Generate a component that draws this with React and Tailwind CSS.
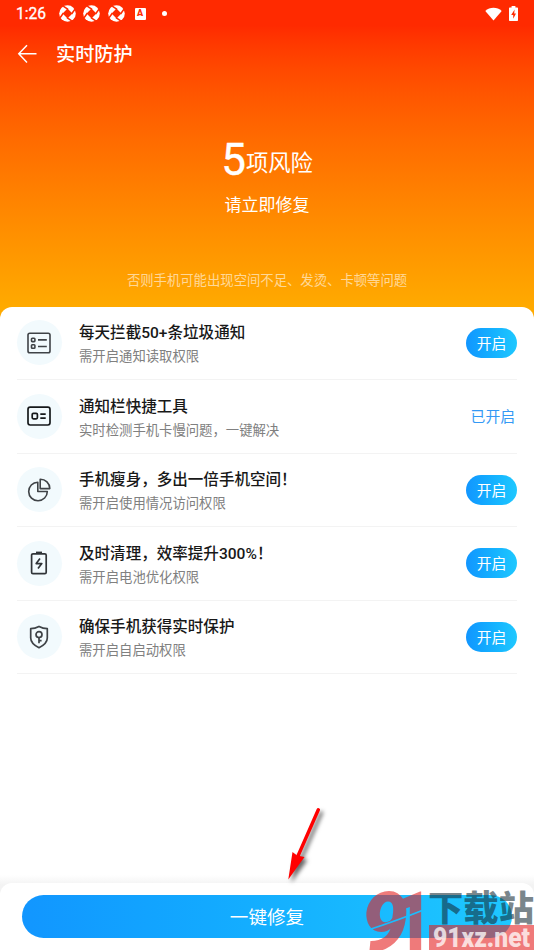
const tasks = [
  { icon: 'list', title: '每天拦截50+条垃圾通知', desc: '需开启通知读取权限', enabled: false },
  { icon: 'card', title: '通知栏快捷工具', desc: '实时检测手机卡慢问题，一键解决', enabled: true },
  { icon: 'pie', title: '手机瘦身，多出一倍手机空间！', desc: '需开启使用情况访问权限', enabled: false },
  { icon: 'battery', title: '及时清理，效率提升300%！', desc: '需开启电池优化权限', enabled: false },
  { icon: 'shield', title: '确保手机获得实时保护', desc: '需开启自启动权限', enabled: false },
];

// Line icons, all on a 24px grid
const icons = {
  list: (
    <g stroke="#3f4347" strokeWidth="1.6">
      <rect x="1" y="2.2" width="22" height="19.6" rx="1.8" />
      <rect x="4.5" y="7.2" width="3.4" height="3.4" rx="0.8" />
      <rect x="4.5" y="13.8" width="3.4" height="3.4" rx="0.8" />
      <path d="M11 8.9h8.800M11 15.500h8.800" />
    </g>
  ),
  card: (
    <g stroke="#16191b" strokeWidth="1.7">
      <rect x="1" y="3.2" width="22" height="17.8" rx="2.2" />
      <rect x="5.2" y="9.4" width="5.2" height="5.4" rx="1.2" />
      <path d="M13.300 10.200h5.400M13.300 14.200h5.400" />
    </g>
  ),
  pie: (
    <g stroke="#3f4347" strokeWidth="1.6" strokeLinejoin="round">
      <path d="M10.800 4.200A9.300 9.300 0 1 0 20.300 13.500H10.800z" />
      <path d="M13.200 1.200v9.400h9.600A9.500 9.500 0 0 0 13.200 1.200z" />
    </g>
  ),
  battery: (
    <g stroke="#303438" strokeWidth="1.7" strokeLinejoin="round">
      <rect x="4.6" y="2.8" width="14.6" height="19.8" rx="1.4" />
      <path d="M9 1.600h6" strokeWidth="2" />
      <path d="M13 7.600l-3.800 5h5.600l-3.800 5" strokeWidth="1.7" />
    </g>
  ),
  shield: (
    <g stroke="#3f4347" strokeWidth="1.7" strokeLinejoin="round">
      <path d="M12 1.400c2.800 1.500 5.400 2.200 8.300 2.300v9.200c0 4.400-3.600 7.400-8.300 9.800-4.700-2.400-8.300-5.400-8.300-9.800V3.700c2.900-.1 5.500-.8 8.300-2.300z" />
      <circle cx="12" cy="9.6" r="3" />
      <path d="M12 12.600v5.600M12 15.700h2.600" />
    </g>
  ),
};

function ApertureIcon() {
  return (
    <svg viewBox="0 0 16 16" className="size-[17px]" fill="none">
      <circle cx="8" cy="8" r="7.8" fill="#fff" />
      <path d="M8 3.400L12.600 8L8 12.600L3.400 8z" fill="#ff2b00" />
      <path
        d="M8.500 4.200L4 1M11.800 8.500L15 4M7.500 11.800L12 15M4.200 7.500L1 12"
        stroke="#ff2b00"
        strokeWidth="1.4"
      />
    </svg>
  );
}

function StatusBar() {
  return (
    <div className="flex h-[27px] items-center pr-[16px] pl-4 text-white">
      <span className="w-[42.5px] font-[Roboto] text-[15.6px] leading-7 [-webkit-text-stroke:0.3px_white]">1:26</span>
      <div className="flex items-center gap-[7.5px]">
        <ApertureIcon />
        <ApertureIcon />
        <ApertureIcon />
      </div>
      <span className="ml-[10px] flex h-[12px] w-[11px] items-center justify-center rounded-[1px] bg-white font-[Roboto] text-[9px] leading-none font-black text-[#ff2b00]">
        A
      </span>
      <span className="ml-[16px] size-[5px] rounded-full bg-white" />
      <svg viewBox="0 0 18 14" className="ml-auto h-[14px] w-[17px]" fill="#fff">
        <path d="M9 14L.3 3.800C5-.8 13-.8 17.700 3.800z" />
      </svg>
      <svg viewBox="0 0 9 15" className="ml-[7px] h-[15px] w-[9px]">
        <path
          d="M2.600 0h3.800v1.600H8.300c.4 0 .7.3.7.7v12c0 .4-.3.700-.7.700H.7c-.4 0-.7-.3-.7-.7v-12c0-.4.3-.7.7-.7h1.900z"
          fill="#fff"
        />
        <path d="M5.600 3.500L2.200 9h2v3.800L7 7.500H5.200z" fill="#ff2b00" />
      </svg>
    </div>
  );
}

function TaskRow({ task }) {
  return (
    <li className="flex h-[73.5px] items-center border-b border-[#f3f3f3]">
      <span className="flex size-[45px] shrink-0 items-center justify-center rounded-full bg-[#f2fafd]">
        <svg viewBox="0 0 24 24" className="mr-px size-6" fill="none">
          {icons[task.icon]}
        </svg>
      </span>
      <div className="ml-[17px] flex-1 pt-[5px] whitespace-nowrap">
        <h2 className="text-[15.55px] leading-6 font-medium text-[#181818]">{task.title}</h2>
        <p className="text-[13.35px] leading-6 text-[#808080]">{task.desc}</p>
      </div>
      {task.enabled ? (
        <span className="mr-[2px] pt-[2px] text-[14.8px] text-[#3399f5]">已开启</span>
      ) : (
        <button className="h-[30px] w-[51px] rounded-full bg-linear-to-r from-[#1296ff] to-[#1fc8ff] pt-px text-[14.8px] leading-[30px] text-white">
          开启
        </button>
      )}
    </li>
  );
}

function Watermark() {
  return (
    <svg viewBox="0 0 174 60" className="absolute right-0 bottom-0 h-[60px] w-[174px]">
      <defs>
        <mask id="slash">
          <rect width="174" height="60" fill="#fff" />
          <path d="M8 40Q36 31 66 19" stroke="#000" strokeWidth="1.8" fill="none" />
        </mask>
      </defs>
      <g mask="url(#slash)" opacity="0.6">
        <text
          y="61"
          fontFamily="Roboto, sans-serif"
          fontSize="83"
          fontWeight="900"
          fill="#e52222"
        >
          <tspan x="1" fontStyle="italic" textLength="47" lengthAdjust="spacingAndGlyphs">9</tspan>
          <tspan x="33" textLength="40" lengthAdjust="spacingAndGlyphs">1</tspan>
        </text>
      </g>
      <text
        x="68"
        y="31"
        textLength="106"
        lengthAdjust="spacingAndGlyphs"
        fontFamily="Noto Sans CJK SC, sans-serif"
        fontSize="35"
        fontWeight="900"
        fill="#142832"
        fillOpacity="0.56"
      >
        下载站
      </text>
      <rect x="69" y="35" width="105" height="25" fill="#e52222" fillOpacity="0.6" />
      <text
        x="73"
        y="56.5"
        textLength="97"
        lengthAdjust="spacingAndGlyphs"
        fontFamily="Roboto, sans-serif"
        fontSize="27"
        fontWeight="900"
        fill="#fff"
        fillOpacity="0.75"
      >
        91xz.net
      </text>
    </svg>
  );
}

function PointerArrow() {
  return (
    <svg
      viewBox="0 0 50 90"
      className="absolute top-[800px] left-[280px] h-[90px] w-[50px] drop-shadow-[3px_3px_2px_rgba(0,0,0,0.6)]"
    >
      <path d="M38.300 9.800L18 56" stroke="#f00" strokeWidth="3.4" strokeLinecap="round" />
      <path d="M8.300 79.500L12.500 52L17 55.500L24.500 57z" fill="#f00" />
    </svg>
  );
}

export default function App() {
  return (
    <div className="relative flex h-[950px] w-[534px] flex-col overflow-hidden bg-white font-[Roboto,'Noto_Sans_CJK_SC',sans-serif]">
      <header className="h-[320px] shrink-0 bg-linear-to-b from-[#ff2a00] from-8% to-[#ffaa00] to-96% text-white">
        <StatusBar />
        <div className="flex h-[53px] items-center pl-[17px]">
          <svg viewBox="0 0 20 20" className="size-5" fill="none" stroke="#fff" strokeWidth="1.5">
            <path d="M10 1.200L1.800 9.800L10 18.400M1.800 9.800H19.500" />
          </svg>
          <h1 className="ml-[19px] pt-[3px] text-[19.2px] font-medium">实时防护</h1>
        </div>
        <div className="pt-[51px] text-center">
          <div className="flex h-[58px] items-center justify-center">
            <span className="text-[44px] leading-[58px] [-webkit-text-stroke:0.4px_white]">5</span>
            <span className="pt-[7px] text-[22.3px]">项风险</span>
          </div>
          <p className="text-[17px] leading-[32px]">请立即修复</p>
          <p className="mt-[48px] text-[13.35px] leading-6 text-white/60">
            否则手机可能出现空间不足、发烫、卡顿等问题
          </p>
        </div>
      </header>

      <main className="-mt-[13.5px] flex-1 rounded-t-[12px] bg-white">
        <ul className="mx-[17px]">
          {tasks.map((task) => (
            <TaskRow key={task.icon} task={task} />
          ))}
        </ul>
      </main>

      <footer className="shrink-0 bg-linear-to-b from-white to-[#f3f3f3] to-[10px] pt-[8px]">
        <div className="h-[67px] rounded-t-[12px] bg-white px-[22px] pt-3">
          <button className="h-[43px] w-full rounded-full bg-linear-to-r from-[#1296ff] to-[#1fc8ff] pt-[3px] text-[18.6px] leading-[40px] text-white">
            一键修复
          </button>
        </div>
      </footer>

      <PointerArrow />
      <Watermark />
    </div>
  );
}
